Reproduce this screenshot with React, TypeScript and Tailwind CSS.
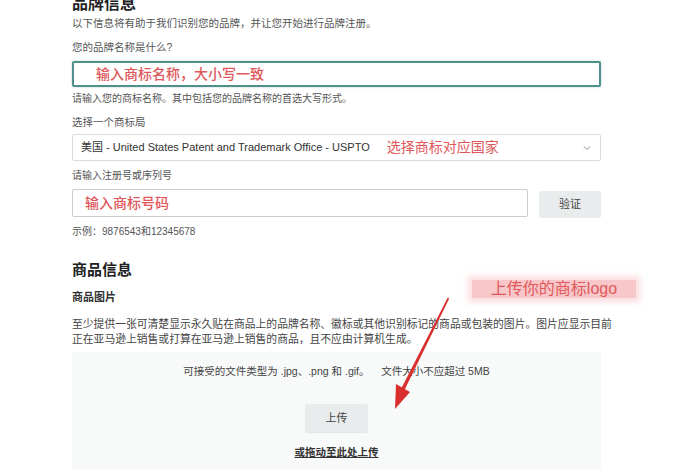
import React from "react";

const font = { fontFamily: '"Liberation Sans", "Noto Sans CJK SC", sans-serif' };

export default function App() {
  return (
    <div className="relative w-[700px] h-[470px] overflow-hidden bg-white text-[#333]" style={font}>
      <div className="pl-[72px] w-[601px] flex flex-col">
        <div className="mt-[-5px] h-[18px] leading-[18px] text-[16px] font-bold text-[#222]">品牌信息</div>
        <div className="mt-[3px] h-[14px] leading-[14px] text-[10.5px] text-[#555]">以下信息将有助于我们识别您的品牌，并让您开始进行品牌注册。</div>
        <div className="mt-[10px] h-[14px] leading-[14px] text-[10.5px] text-[#555]">您的品牌名称是什么?</div>
        <div className="mt-[7px] h-[26px] border-2 border-[#4f8f8c] rounded-[2px] flex items-center pl-[22px] shadow-[0_0_2px_rgba(79,143,140,0.5)]">
          <span className="text-[14px] text-[#e0585b] font-medium">输入商标名称，大小写一致</span>
        </div>
        <div className="mt-[5px] h-[14px] leading-[14px] text-[10px] text-[#555]">请输入您的商标名称。其中包括您的品牌名称的首选大写形式。</div>
        <div className="mt-[9px] h-[14px] leading-[14px] text-[10.5px] text-[#555]">选择一个商标局</div>
        <div className="mt-[5px] h-[27px] border border-[#d9dcdc] rounded-[2px] flex items-center pl-[8px] pr-[8px]">
          <span className="text-[11px] text-[#333]">美国 - United States Patent and Trademark Office - USPTO</span>
          <span className="ml-[17px] text-[14px] text-[#e0585b]">选择商标对应国家</span>
          <svg className="ml-auto" width="10" height="10" viewBox="0 0 10 10">
            <path d="M2 3.5 L5 6.5 L8 3.5" fill="none" stroke="#888" strokeWidth="1" />
          </svg>
        </div>
        <div className="mt-[8px] h-[14px] leading-[14px] text-[10px] text-[#555]">请输入注册号或序列号</div>
        <div className="mt-[6px] flex gap-[11px] items-start">
          <div className="w-[457px] h-[28px] border border-[#c9cccc] rounded-[2px] flex items-center pl-[12px]">
            <span className="text-[14px] text-[#e0585b] font-medium">输入商标号码</span>
          </div>
          <div className="mt-[2px] w-[62px] h-[27px] bg-[#e9ecec] rounded-[2px] flex items-center justify-center text-[11px] text-[#444]">验证</div>
        </div>
        <div className="mt-[7px] h-[14px] leading-[14px] text-[10px] text-[#555]">示例：9876543和12345678</div>
        <div className="mt-[22px] h-[18px] leading-[18px] text-[15px] font-bold text-[#222]">商品信息</div>
        <div className="mt-[11px] h-[14px] leading-[14px] text-[11px] font-bold text-[#333]">商品图片</div>
        <div className="mt-[13px] text-[10.8px] leading-[15px] text-[#444] whitespace-nowrap">
          至少提供一张可清楚显示永久贴在商品上的品牌名称、徽标或其他识别标记的商品或包装的图片。图片应显示目前<br />
          正在亚马逊上销售或打算在亚马逊上销售的商品，且不应由计算机生成。
        </div>
        <div className="mt-[5px] h-[130px] bg-[#f8f9f9] flex flex-col items-center">
          <div className="mt-[12px] h-[14px] leading-[14px] text-[10.5px] text-[#444] whitespace-pre">可接受的文件类型为 .jpg、.png 和 .gif。    文件大小不应超过 5MB</div>
          <div className="mt-[26px] w-[63px] h-[28px] bg-[#e9ecec] rounded-[2px] shadow-[0_1px_1px_rgba(0,0,0,0.08)] flex items-center justify-center text-[11px] text-[#444]">上传</div>
          <div className="mt-[13px] h-[14px] leading-[14px] text-[10.5px] font-bold text-[#333] underline">或拖动至此处上传</div>
        </div>
      </div>

      <div className="absolute left-[472px] top-[280px] w-[164px] h-[18px] bg-[#f7c7c9] flex items-center justify-center text-[16px] leading-[18px] text-[#e0585b] shadow-[0_0_6px_4px_rgba(247,199,201,0.6)]">
        上传你的商标logo
      </div>

      <svg className="absolute left-0 top-0 pointer-events-none" width="700" height="470" viewBox="0 0 700 470">
        <polygon points="448,297 449,299 403,393 400,391" fill="#d8302e" />
        <polygon points="395,409 396,384 410,392" fill="#d8302e" />
      </svg>
    </div>
  );
}
